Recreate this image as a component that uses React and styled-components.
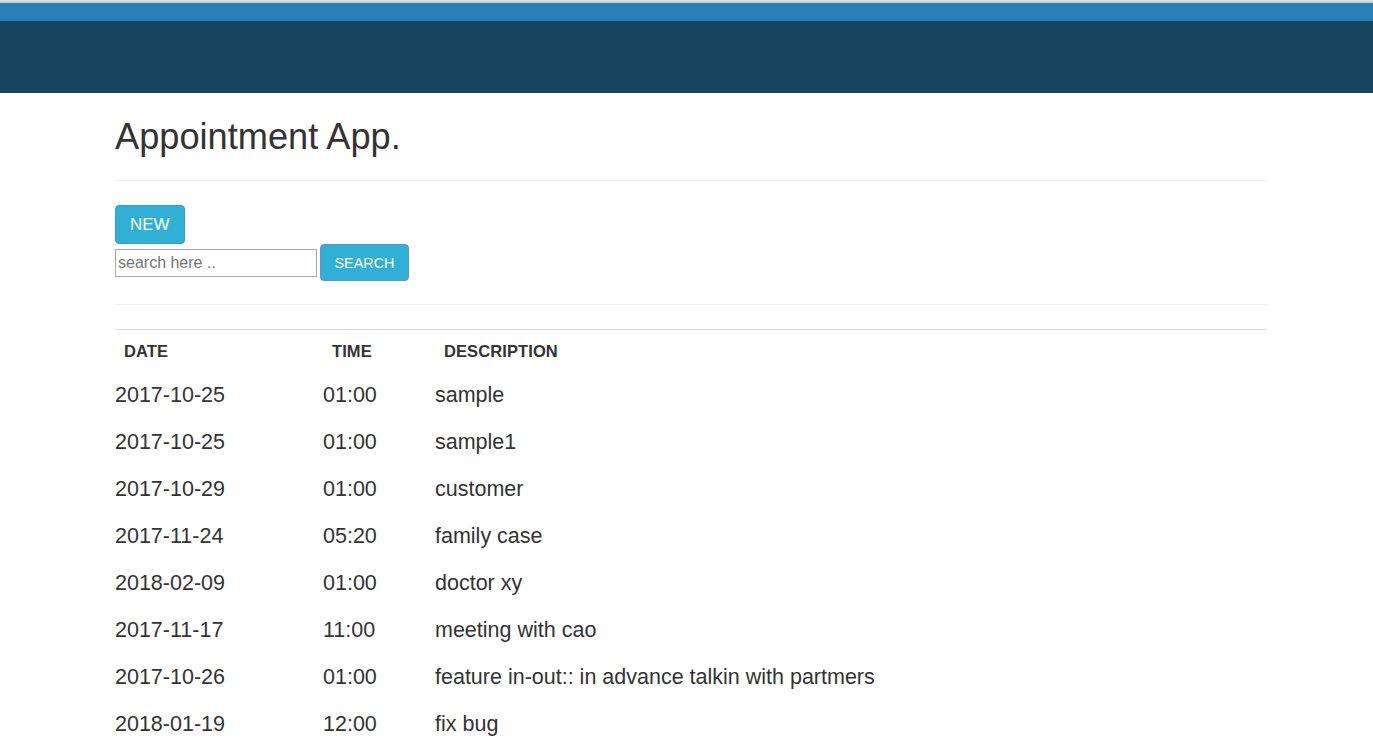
import React from "react";
import styled, { createGlobalStyle } from "styled-components";

const GlobalStyle = createGlobalStyle`
  body {
    margin: 0;
    background: #fff;
    font-family: "Liberation Sans", Arial, Helvetica, sans-serif;
    color: #333;
  }
`;

const TopBar = styled.div`
  height: 3px;
  background: linear-gradient(#e4e4e4, #c4c4c4);
`;
const NavStripe = styled.div`
  height: 18px;
  background: #2a7fb8;
`;
const NavBody = styled.div`
  height: 72px;
  background: #17445f;
`;

const Container = styled.div`
  width: 1152px;
  margin-left: 115px;
`;

const PageHeader = styled.div`
  padding: 24px 0 23px;
  border-bottom: 1px solid #eee;
`;
const Title = styled.h1`
  margin: 0;
  font-size: 36.2px;
  font-weight: 400;
  line-height: 40px;
`;

const Controls = styled.div`
  padding-top: 24px;
  padding-bottom: 23px;
  border-bottom: 1px solid #eee;
`;

const Button = styled.button`
  font-family: "Liberation Sans", Arial, sans-serif;
  font-size: ${p => p.size}px;
  color: #fff;
  background: #31b0d5;
  border: 1px solid ${p => p.border};
  border-radius: 4px;
  height: ${p => p.height}px;
  padding: 0 ${p => p.pad}px;
  cursor: pointer;
`;

const SearchRow = styled.div`
  display: flex;
  align-items: center;
  gap: 3px;
`;
const SearchInput = styled.input`
  box-sizing: border-box;
  width: 202px;
  height: 28px;
  padding: 1px 2px;
  border: 1px solid #a9a9a9;
  font-family: "Liberation Sans", Arial, sans-serif;
  font-size: 16px;
  color: #333;
  &::placeholder {
    color: #757575;
  }
`;

const Table = styled.div`
  margin-top: 24px;
  border-top: 1px solid #ddd;
`;
const Row = styled.div`
  display: grid;
  grid-template-columns: 208px 112px 1fr;
  align-items: center;
  height: ${p => (p.head ? "auto" : "47px")};
`;
const HeadCell = styled.div`
  padding: 10px 9px 9px;
  font-size: 16.5px;
  font-weight: 700;
  line-height: 22px;
  letter-spacing: 0.1px;
`;
const Cell = styled.div`
  font-size: 21.5px;
  line-height: 26px;
`;

const appointments = [
  ["2017-10-25", "01:00", "sample"],
  ["2017-10-25", "01:00", "sample1"],
  ["2017-10-29", "01:00", "customer"],
  ["2017-11-24", "05:20", "family case"],
  ["2018-02-09", "01:00", "doctor xy"],
  ["2017-11-17", "11:00", "meeting with cao"],
  ["2017-10-26", "01:00", "feature in-out:: in advance talkin with partmers"],
  ["2018-01-19", "12:00", "fix bug"],
];

export default function App() {
  return (
    <>
      <GlobalStyle />
      <TopBar />
      <NavStripe />
      <NavBody />
      <Container>
        <PageHeader>
          <Title>Appointment App.</Title>
        </PageHeader>
        <Controls>
          <Button size={17} height={39} pad={14} border="#2aa3c6">NEW</Button>
          <SearchRow>
            <SearchInput placeholder="search here .." />
            <Button size={14.4} height={37} pad={13.5} border="#5b93dc">SEARCH</Button>
          </SearchRow>
        </Controls>
        <Table>
          <Row head>
            <HeadCell>DATE</HeadCell>
            <HeadCell>TIME</HeadCell>
            <HeadCell>DESCRIPTION</HeadCell>
          </Row>
          {appointments.map(([date, time, desc], i) => (
            <Row key={i}>
              <Cell>{date}</Cell>
              <Cell>{time}</Cell>
              <Cell>{desc}</Cell>
            </Row>
          ))}
        </Table>
      </Container>
    </>
  );
}
